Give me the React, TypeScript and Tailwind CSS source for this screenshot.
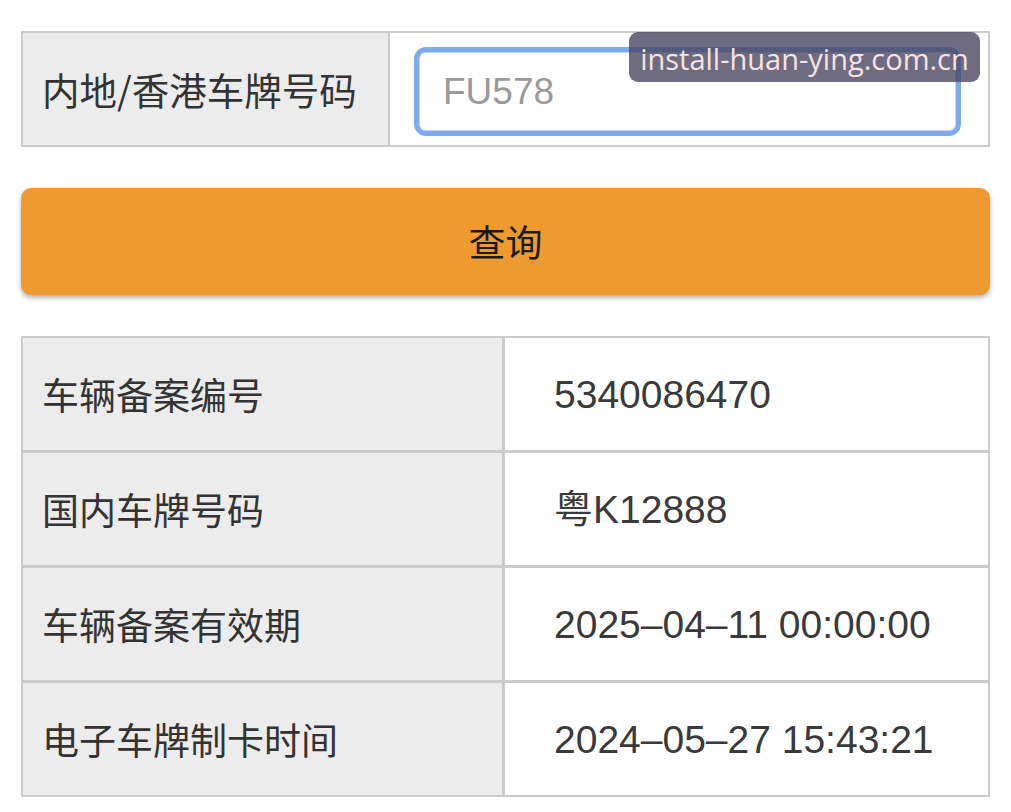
import React from "react";

const rows = [
  ["车辆备案编号", "5340086470"],
  ["国内车牌号码", "粤K12888"],
  ["车辆备案有效期", "2025-04-11 00:00:00"],
  ["电子车牌制卡时间", "2024-05-27 15:43:21"],
];

const cjk = { fontFamily: '"Noto Sans CJK SC", "Noto Sans", sans-serif' };
const val = { fontFamily: '"Liberation Sans", "Noto Sans CJK SC", sans-serif' };

export default function App() {
  return (
    <div className="relative w-[1011px] h-[812px] overflow-hidden bg-white pt-[31px] px-[21px]">
      <div className="flex h-[116px] border-2 border-[#cbcbcb]">
        <div className="w-[367px] bg-[#ececec] border-r-2 border-[#cbcbcb] flex items-center pl-[19px]">
          <span className="text-[37.5px] text-[#333] leading-none" style={cjk}>内地/香港车牌号码</span>
        </div>
        <div className="flex-1 bg-white flex items-center pl-[24px] pr-[26px]">
          <div className="mt-[4px] w-[547px] h-[89px] rounded-[12px] border-[5px] border-[#7eabf0] shadow-[inset_0_0_0_1px_#c9d4e6] flex items-center pl-[24px]">
            <span className="text-[37px] text-[#9a9a9a] leading-none" style={val}>FU578</span>
          </div>
        </div>
      </div>

      <div className="absolute left-[629px] top-[32px] w-[351px] h-[50px] rounded-[9px] bg-[rgba(70,66,95,0.78)] flex items-center justify-center">
        <span className="mt-[3px] text-[29px] text-[#f6e3e3] leading-none" style={{ fontFamily: '"Open Sans", "Noto Sans", sans-serif' }}>install-huan-ying.com.cn</span>
      </div>

      <div className="mt-[41px] h-[107px] rounded-[10px] bg-[#ef9a30] shadow-[0_3px_5px_rgba(0,0,0,0.3)] flex items-center justify-center">
        <span className="text-[37px] text-[#1a1a1a] leading-none" style={cjk}>查询</span>
      </div>

      <div className="mt-[41px] border-2 border-[#cbcbcb]">
        {rows.map(([k, v], i) => (
          <div key={k} className={`flex ${i > 0 ? "h-[115px] border-t-[3px] border-[#cbcbcb]" : "h-[112px]"}`}>
            <div className="w-[482px] bg-[#ececec] border-r-[3px] border-[#cbcbcb] flex items-center pl-[19px]">
              <span className="text-[37px] text-[#333] leading-none" style={cjk}>{k}</span>
            </div>
            <div className="flex-1 bg-white flex items-center pl-[49px]">
              <span className="text-[39px] text-[#3a3a3a] leading-none" style={val}>{v.replace(/-/g, "–")}</span>
            </div>
          </div>
        ))}
      </div>
    </div>
  );
}
